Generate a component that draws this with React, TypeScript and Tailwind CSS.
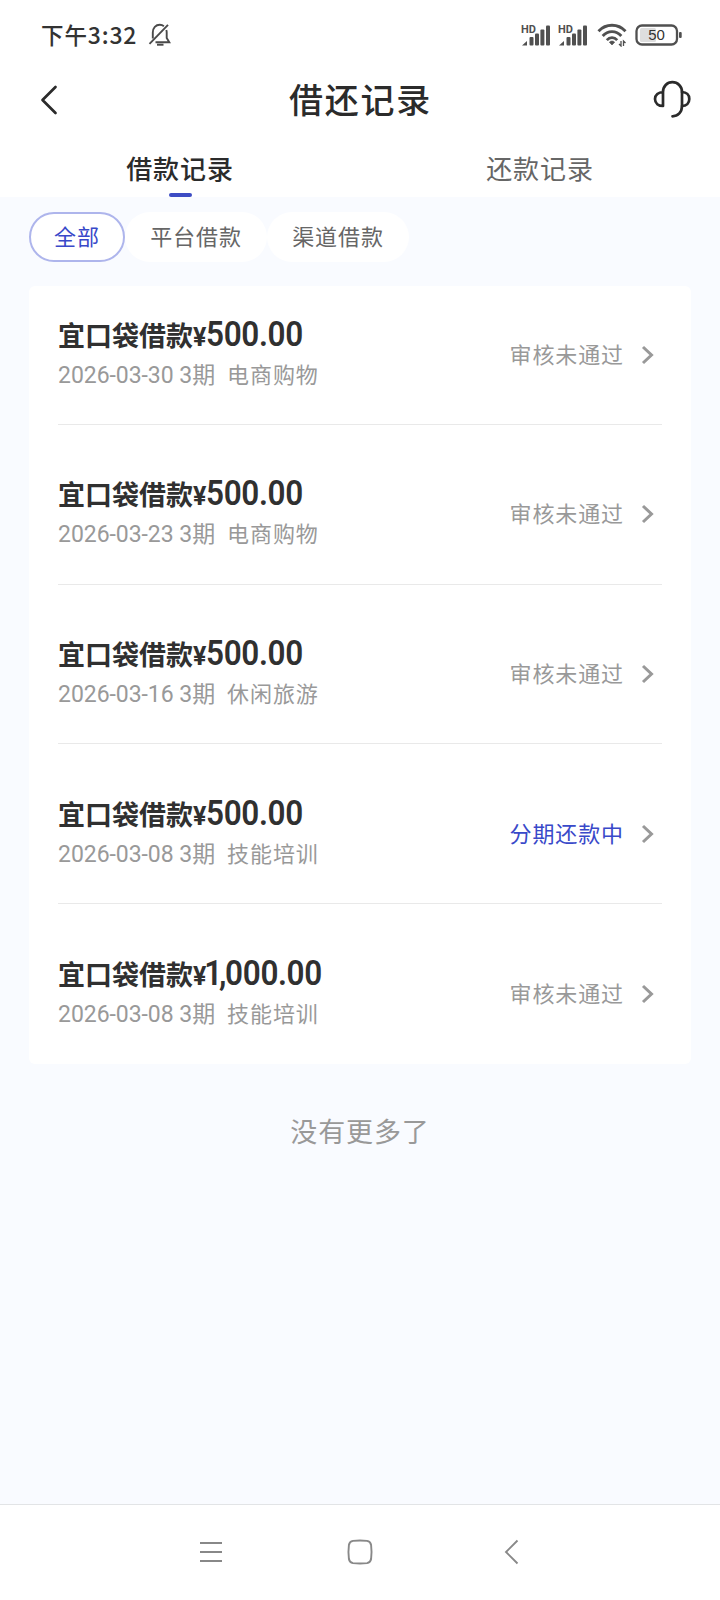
type Loan = {
  amount: string;
  date: string;
  purpose: string;
  status: string;
  active?: boolean;
};

const loans: Loan[] = [
  { amount: "500.00", date: "2026-03-30", purpose: "电商购物", status: "审核未通过" },
  { amount: "500.00", date: "2026-03-23", purpose: "电商购物", status: "审核未通过" },
  { amount: "500.00", date: "2026-03-16", purpose: "休闲旅游", status: "审核未通过" },
  { amount: "500.00", date: "2026-03-08", purpose: "技能培训", status: "分期还款中", active: true },
  { amount: "1,000.00", date: "2026-03-08", purpose: "技能培训", status: "审核未通过" },
];

function MuteIcon() {
  return (
    <svg className="ml-[11px] h-6 w-6" viewBox="0 0 24 24" fill="none" stroke="#4a4a4a" strokeWidth={1.9}>
      <path d="M4.800 15.500V9.500C4.800 5 7.800 1.800 11.800 1.800c1.600 0 3 .5 4.100 1.400M18.300 7c.3.800.4 1.600.4 2.500v5.500l2.600 4.300H7.500" />
      <path d="M20 1.800L1.500 20.800" />
      <path d="M9 21.700h6.500" strokeWidth={2} />
    </svg>
  );
}

function SignalIcon() {
  return (
    <svg className="h-[23px] w-[30px]" viewBox="0 0 30 23">
      <text x="0" y="8.500" fontSize="11" fontWeight="700" fill="#505050" fontFamily="Roboto, sans-serif">
        HD
      </text>
      <g fill="#505050">
        <path d="M1 21.500l5-4.500v4.500z" />
        <rect x="8.500" y="13" width="4" height="8.500" rx="1" />
        <rect x="14" y="9.500" width="4" height="12" rx="1" />
        <rect x="19.400" y="5.500" width="4" height="16" rx="1" />
        <rect x="25" y="1.500" width="4" height="20" rx="1" />
      </g>
    </svg>
  );
}

function WifiIcon() {
  return (
    <svg className="h-6 w-[30px]" viewBox="0 0 30 24" fill="none" stroke="#505050">
      <path d="M1.500 8.300C9 .3 21 .3 28.500 8.300" strokeWidth={2.900} />
      <path d="M5.700 12.900c5.200-5.700 13.400-5.700 18.600 0" strokeWidth={2.900} />
      <path d="M9.800 17.100c3-3.300 7.400-3.300 10.400 0" strokeWidth={2.800} />
      <path d="M12.300 19.200c1.500-1.600 3.900-1.600 5.400 0L15 22z" fill="#505050" strokeWidth={0.600} />
      <path d="M24 18v5l-2-2M26.500 23v-5l2 2" strokeWidth={1.300} />
    </svg>
  );
}

function BatteryIcon() {
  return (
    <svg className="h-[22px] w-[48px]" viewBox="0 0 48 22">
      <rect x="5" y="4" width="16" height="14" rx="1.500" fill="#dedede" />
      <rect x="1.500" y="1.500" width="40.500" height="19" rx="5.500" fill="none" stroke="#505050" strokeWidth={2.300} />
      <rect x="44" y="8" width="2.700" height="6" rx="1" fill="#505050" />
      <text x="21.500" y="16" textAnchor="middle" fontSize="15" fill="#333" fontFamily="'Liberation Sans', sans-serif">
        50
      </text>
    </svg>
  );
}

function StatusBar() {
  return (
    <div className="flex h-[70px] items-center pr-[37px] pl-[41px] text-[#333]">
      <span className="pb-[2px] text-[22.500px] font-medium tracking-[0.900px]">
        下午<span className="text-[23px] tracking-[0.800px]">3:32</span>
      </span>
      <MuteIcon />
      <div className="ml-auto flex items-center">
        <SignalIcon />
        <div className="ml-[7px]">
          <SignalIcon />
        </div>
        <div className="ml-[9px]">
          <WifiIcon />
        </div>
        <div className="ml-[8px]">
          <BatteryIcon />
        </div>
      </div>
    </div>
  );
}

function Header() {
  return (
    <header className="flex h-[60px] items-center justify-between pr-[29px] pl-[40px] text-[#2b2b2b]">
      <svg className="h-[30px] w-[28px]" viewBox="0 0 28 30" fill="none" stroke="currentColor" strokeWidth={2.700} strokeLinecap="round" strokeLinejoin="round">
        <path d="M15.500 2L2.500 15l13 13" />
      </svg>
      <h1 className="pb-[4px] text-[34px] font-medium tracking-[1.800px]">借还记录</h1>
      <svg className="mb-[2px] h-[38px] w-[38px]" viewBox="0 0 38 38" fill="none" stroke="currentColor" strokeWidth={2.700} strokeLinecap="round" strokeLinejoin="round">
        <path d="M10 12v14c-4.500 0-8-2.700-8-7 0-4 3.500-6.800 8-7zc0-5.500 4-9.900 9.400-9.900S29 6.500 29 12v14c0 6-4 10.300-9.500 10.300" />
        <path d="M29 12c4.500.2 7.300 3 7.300 7s-2.800 7-7.300 7" />
      </svg>
    </header>
  );
}

// The thousands digit and its comma sit tighter than the rest of the amount
function Amount({ value }: { value: string }) {
  const [head, tail] = value.includes(",") ? value.split(",") : ["", value];

  return (
    <span className="inline-block origin-left scale-x-[0.9] font-[Roboto] text-[35px] leading-[40px] font-semibold tracking-[-0.400px]">
      {head && <span className="-ml-[2px] tracking-[-3.500px]">{head}</span>}
      {head && <span className="tracking-[-1.500px]">,</span>}
      {tail}
    </span>
  );
}

function LoanRow({ loan, first }: { loan: Loan; first: boolean }) {
  return (
    <li
      className={`flex items-center justify-between border-b border-[#e9e9e9] pr-[7px] last:border-b-0 ${
        first ? "h-[139px]" : "h-[159.700px] pt-[20px]"
      }`}
    >
      <div className="pb-[4px]">
        <div className="flex h-[40px] items-baseline pt-px text-[#303030]">
          <span className="text-[27px] leading-[40px] font-bold">宜口袋借款</span>
          <span className="font-[Roboto] text-[25px] font-bold tracking-[-0.800px]">¥</span>
          <Amount value={loan.amount} />
        </div>
        <div className="flex h-[38px] items-baseline text-[22px] leading-[38px] text-[#999]">
          <span className="font-[Roboto,'Noto_Sans_CJK_SC'] text-[23px] tracking-[-0.050px]">{loan.date} 3期</span>
          <span className="ml-[12px] tracking-[0.900px]">{loan.purpose}</span>
        </div>
      </div>
      <div className="flex items-center">
        <span className={`pb-[3px] text-[22px] tracking-[0.900px] ${loan.active ? "text-[#3949c9]" : "text-[#999]"}`}>
          {loan.status}
        </span>
        <svg className="ml-[17px] h-[20px] w-[14px]" viewBox="0 0 14 20" fill="none" stroke="#999" strokeWidth={3}>
          <path d="M2 2l8.500 8L2 18" />
        </svg>
      </div>
    </li>
  );
}

function NavBar() {
  return (
    <nav className="flex h-[96px] items-center justify-between border-t border-[#e2e4e6] bg-white px-[199px] pb-[2px]">
      <svg className="h-6 w-6" viewBox="0 0 24 24" stroke="#888" strokeWidth={1.800}>
        <path d="M1 3h22M1 12h22M1 21h22" />
      </svg>
      <svg className="h-[26px] w-[26px]" viewBox="0 0 26 26" fill="none" stroke="#888" strokeWidth={1.900}>
        <path d="M6 1.900Q13 1 20 1.900Q23.500 2.500 24.100 6Q25 13 24.100 20Q23.500 23.500 20 24.100Q13 25 6 24.100Q2.500 23.500 1.900 20Q1 13 1.900 6Q2.500 2.500 6 1.900Z" />
      </svg>
      <svg className="h-[26px] w-6" viewBox="0 0 24 26" fill="none" stroke="#888" strokeWidth={1.900}>
        <path d="M20.500 1.500L9 13l11.500 11.500" />
      </svg>
    </nav>
  );
}

export default function App() {
  return (
    <div className="flex h-[1600px] w-[720px] flex-col bg-[#f9fbff] font-['Noto_Sans_CJK_SC',sans-serif]">
      <div className="h-[197px] bg-white">
        <StatusBar />
        <Header />
        <div className="grid h-[67px] grid-cols-2 text-center text-[26px] tracking-[0.900px]">
          <div className="flex flex-col items-center font-medium text-[#2b2b2b]">
            <span className="mt-[17px] h-[46px] leading-[42px]">借款记录</span>
            <span className="h-[4px] w-[23px] shrink-0 rounded-full bg-[#3d4cc4]" />
          </div>
          <div className="pt-[17px] leading-[42px] text-[#666]">还款记录</div>
        </div>
      </div>

      <div className="flex pt-[15px] pl-[29px] text-[22px] tracking-[0.900px] text-[#666]">
        <button className="h-[50px] w-[96px] rounded-full border-2 border-[#aeb5ec] bg-white pb-[3px] text-[#3949c9]">全部</button>
        <button className="h-[50px] w-[142px] rounded-full bg-white pb-[3px]">平台借款</button>
        <button className="h-[50px] w-[142px] rounded-full bg-white pb-[3px]">渠道借款</button>
      </div>

      <ul className="mx-[29px] mt-[24px] rounded-[6px] bg-white px-[29px]">
        {loans.map((loan, i) => (
          <LoanRow key={i} loan={loan} first={i === 0} />
        ))}
      </ul>

      <p className="mt-[47px] text-center text-[27px] leading-[40px] tracking-[0.900px] text-[#999]">没有更多了</p>

      <div className="mt-auto">
        <NavBar />
      </div>
    </div>
  );
}
